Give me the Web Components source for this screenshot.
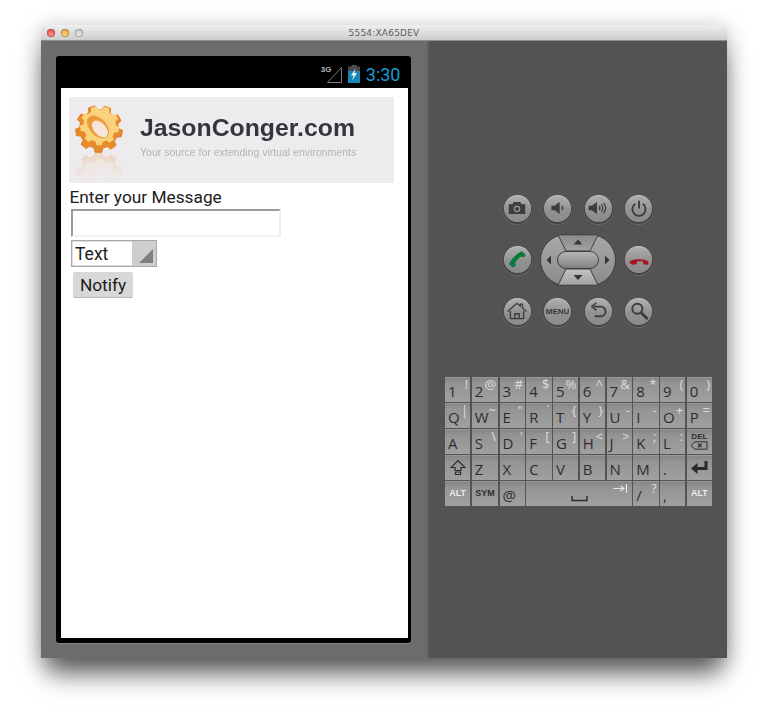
<!DOCTYPE html>
<html>
<head>
<meta charset="utf-8">
<title>5554:XA65DEV</title>
<style>
  html, body { margin: 0; background: #fff; }
  body { font-family: "Roboto", "Liberation Sans", sans-serif; height: 715px; overflow: hidden; }
</style>
</head>
<body>
<emu-window title="5554:XA65DEV">
  <emu-phone slot="left">
    <logo-banner></logo-banner>
    <message-form></message-form>
  </emu-phone>
  <emu-controls slot="right"></emu-controls>
  <emu-keyboard slot="right"></emu-keyboard>
</emu-window>

<script>
class EmuWindow extends HTMLElement {
  constructor() {
    super();
    this.attachShadow({ mode: "open" });
    this.shadowRoot.innerHTML = `
    <style>
      :host {
        display: block;
        width: 686px;
        height: 633px;
        margin: 25px 0 0 41px;
        border-radius: 4px 4px 1px 1px;
        box-shadow: 0 22px 24px -6px rgba(0,0,0,.56), 0 4px 22px rgba(0,0,0,.28);
      }
      .title {
        height: 16px;
        display: flex;
        align-items: center;
        position: relative;
        justify-content: center;
        border-radius: 4px 4px 0 0;
        background: linear-gradient(#efefef, #cdcdcd);
        border-bottom: 1px solid #8f8f8f;
        box-sizing: border-box;
        font: 9px "DejaVu Sans", sans-serif;
        color: #5e5e5e;
        letter-spacing: .2px;
      }
      .lights {
        position: absolute;
        left: 6px;
        top: 4px;
        display: flex;
        gap: 6px;
      }
      .lights i {
        width: 8px;
        height: 8px;
        border-radius: 50%;
        box-shadow: inset 0 0 0 .5px rgba(0,0,0,.35);
      }
      .body { display: flex; height: 617px; }
      .left {
        width: 387px;
        box-sizing: border-box;
        padding: 15px 0 0 15px;
        background: #6c6c6c;
        border-right: 1px solid #5f5f5f;
      }
      .right {
        flex: 1;
        box-sizing: border-box;
        padding: 153px 0 0 16px;
        background: #535353;
        border-left: 1px solid #626262;
      }
    </style>
    <div class="title">
      <div class="lights">
        <i style="background:radial-gradient(circle at 50% 70%,#ff8a80,#d9403a)"></i>
        <i style="background:radial-gradient(circle at 50% 70%,#ffd27a,#d9982c)"></i>
        <i style="background:radial-gradient(circle at 50% 70%,#e8e8e8,#b8b8b8)"></i>
      </div>
      <span>${this.getAttribute("title")}</span>
    </div>
    <div class="body">
      <div class="left"><slot name="left"></slot></div>
      <div class="right"><slot name="right"></slot></div>
    </div>`;
  }
}

class EmuPhone extends HTMLElement {
  constructor() {
    super();
    this.attachShadow({ mode: "open" });
    this.shadowRoot.innerHTML = `
    <style>
      :host {
        display: block;
        width: 355px;
        height: 587px;
        box-sizing: border-box;
        padding: 0 3px 5px 5px;
        background: #000;
        border-radius: 3px;
        box-shadow: 0 1px 1px rgba(255,255,255,.18);
      }
      .status {
        height: 32px;
        display: flex;
        align-items: center;
        justify-content: flex-end;
        padding-right: 7.500px;
        box-sizing: border-box;
        padding-top: 4px;
      }
      .signal { position: relative; width: 21px; height: 19px; margin-right: 5px; }
      .signal b {
        position: absolute;
        left: -1px;
        top: 0;
        font: bold 8px "Liberation Sans", sans-serif;
        color: #b5b5b5;
      }
      .time {
        font: 18px "Roboto", sans-serif;
        color: #1b9ad1;
        margin-left: 6px;
      }
      .screen {
        height: 550px;
        box-sizing: border-box;
        padding: 9px 14px 0 8px;
        background: #fff;
      }
    </style>
    <div class="status">
      <div class="signal">
        <b>3G</b>
        <svg width="21" height="19" viewBox="0 0 21 19">
          <path d="M5.5 17.5 L19.5 2.5 V17.5 Z" fill="none" stroke="#7a7a7a" stroke-width="1"/>
        </svg>
      </div>
      <svg width="12" height="18" viewBox="0 0 12 18">
        <rect x="3.5" y="0" width="5" height="2" fill="#555"/>
        <rect x="0" y="1.5" width="12" height="5" fill="#4a4a4a"/>
        <rect x="0" y="6" width="12" height="12" fill="#1a86b8"/>
        <path d="M7.5 3.5 L3 10.5 H5.6 L4.2 15.5 L9 8 H6.3 Z" fill="#e8f2f7"/>
      </svg>
      <span class="time">3:30</span>
    </div>
    <div class="screen"><slot></slot></div>`;
  }
}

class LogoBanner extends HTMLElement {
  constructor() {
    super();
    this.attachShadow({ mode: "open" });

    // build the gear outline
    const pts = [];
    const teeth = 9;
    for (let i = 0; i < teeth; i++) {
      const a = (i / teeth) * Math.PI * 2 + 0.2;
      const step = (Math.PI * 2) / teeth;
      [[-0.32, 19.5], [-0.2, 23.5], [0.2, 23.5], [0.32, 19.5]].forEach(([d, r]) => {
        const t = a + d * step;
        pts.push((24 + Math.cos(t) * r).toFixed(1) + "," + (24 + Math.sin(t) * r).toFixed(1));
      });
    }
    const gear = `
      <polygon points="${pts.join(" ")}" fill="#e98a2c" stroke="#e08028" stroke-width="1" stroke-linejoin="round"/>
      <polygon points="${pts.join(" ")}" fill="#fbd27c" transform="translate(4.500 .5) scale(.84)"/>
      <ellipse cx="23" cy="22" rx="8.500" ry="13.500" transform="rotate(-42 23 22)" fill="#ee9a3a"/>
      <ellipse cx="25" cy="24" rx="6" ry="10" transform="rotate(-42 25 24)" fill="#f6e6da"/>`;

    this.shadowRoot.innerHTML = `
    <style>
      :host {
        display: flex;
        height: 86px;
        width: 325px;
        background: #eeebee;
        overflow: hidden;
        box-sizing: border-box;
      }
      .mark { width: 71px; padding: 8px 0 0 6px; box-sizing: border-box; flex: none; }
      .mark svg { display: block; }
      .main-gear { filter: blur(.35px); }
      .reflect {
        transform: scaleY(-1);
        margin-top: -2px;
        opacity: .22;
        filter: blur(.7px);
        -webkit-mask-image: linear-gradient(transparent 35%, #000);
        mask-image: linear-gradient(transparent 35%, #000);
      }
      .text { padding-top: 16px; filter: blur(.25px); }
      .name {
        font: bold 24.800px/30px "Liberation Sans", sans-serif;
        color: #33363a;
        white-space: nowrap;
      }
      .tag {
        font: 10.500px/14px "Liberation Sans", sans-serif;
        color: #b4b4b4;
        margin-top: 2px;
        white-space: nowrap;
      }
    </style>
    <div class="mark">
      <svg class="main-gear" width="48" height="48" viewBox="0 0 48 48">${gear}</svg>
      <svg class="reflect" width="48" height="48" viewBox="0 0 48 48">${gear}</svg>
    </div>
    <div class="text">
      <div class="name">JasonConger.com</div>
      <div class="tag">Your source for extending virtual environments</div>
    </div>`;
  }
}

class MessageForm extends HTMLElement {
  constructor() {
    super();
    this.attachShadow({ mode: "open" });
    this.shadowRoot.innerHTML = `
    <style>
      :host {
        display: flex;
        flex-direction: column;
        align-items: flex-start;
        font-family: "Roboto", "Liberation Sans", sans-serif;
        color: #1c1c1c;
      }
      .label { font-size: 17.300px; line-height: 26px; margin-left: .5px; padding-top: 1px; margin-bottom: -1px; }
      .input {
        width: 210px;
        height: 28px;
        box-sizing: border-box;
        margin-left: 2px;
        border: 2px solid #f0f0f0;
        border-top-color: #9a9a9a;
        border-left-color: #9a9a9a;
      }
      .spinner {
        display: flex;
        width: 86px;
        height: 27px;
        box-sizing: border-box;
        margin: 3px 0 0 2px;
        border: 1px solid #a8a8a8;
        box-shadow: inset 0 0 0 .5px #bbb;
        font-size: 17.500px;
      }
      .spinner span { flex: 1; line-height: 27px; padding-left: 3px; }
      .spinner i {
        width: 24px;
        display: flex;
        align-items: flex-end;
        justify-content: flex-end;
        padding: 0 3px 3px 0;
        box-sizing: border-box;
        background: #cecece;
      }
      .btn {
        width: 60px;
        height: 26px;
        margin: 5px 0 0 4px;
        background: #d8d8d8;
        border-radius: 2px;
        border-bottom: 1px solid #b9b9b9;
        box-sizing: border-box;
        display: flex;
        align-items: center;
        justify-content: center;
        font-size: 17.300px;
      }
    </style>
    <div class="label">Enter your Message</div>
    <div class="input"></div>
    <div class="spinner">
      <span>Text</span>
      <i><svg width="14" height="14" viewBox="0 0 14 14"><path d="M14 0 V14 H0 Z" fill="#808080"/></svg></i>
    </div>
    <div class="btn">Notify</div>`;
  }
}

class RoundButton extends HTMLElement {
  constructor() {
    super();
    this.attachShadow({ mode: "open" });
    this.shadowRoot.innerHTML = `
    <style>
      :host {
        display: flex;
        width: 27px;
        height: 27px;
        align-items: center;
        justify-content: center;
        border-radius: 50%;
        background: linear-gradient(#b0b0b0, #929292 55%, #8a8a8a);
        box-shadow: 0 1px 0 1px #454545, 0 2px 1px 1px rgba(255,255,255,.13), inset 0 1px 1px rgba(255,255,255,.25);
        font: bold 8px "Liberation Sans", sans-serif;
        color: #3a3a3a;
      }
      ::slotted(svg) { display: block; }
    </style>
    <slot></slot>`;
  }
}

class EmuControls extends HTMLElement {
  constructor() {
    super();
    this.attachShadow({ mode: "open" });
    const svg = (body) =>
      `<svg width="22" height="22" viewBox="0 0 20 20">${body}</svg>`;
    const ink = "#3c3c3c";
    this.shadowRoot.innerHTML = `
    <style>
      :host {
        display: grid;
        grid-template-columns: repeat(4, 28px);
        grid-template-rows: 28px 52px 28px;
        column-gap: 12.600px;
        row-gap: 11.500px;
        margin-left: 58px;
        align-items: center;
        justify-items: center;
      }
      .dpad { grid-column: span 2; justify-self: center; margin: 0 -4px; display: block; }
    </style>
    <round-button>${svg(`<path d="M2.500 6.500h3.500l1-2h6l1 2h3.500v9h-15z" fill="${ink}"/><circle cx="10" cy="10.800" r="3" fill="#8f8f8f"/><circle cx="10" cy="10.800" r="1.700" fill="${ink}"/>`)}</round-button>
    <round-button>${svg(`<path d="M4 8h3l4.500-3.500v11L7 12H4z" fill="${ink}"/><path d="M13.500 8.200c.8 1 .8 2.600 0 3.600" fill="none" stroke="${ink}" stroke-width="1.200"/>`)}</round-button>
    <round-button>${svg(`<path d="M1.500 8h3L9 4.500v11L4.500 12h-3z" fill="${ink}"/><path d="M11 8.200c.8 1 .8 2.600 0 3.600M13 6.800c1.400 1.800 1.400 4.600 0 6.400M15.200 5.400c2 2.700 2 6.500 0 9.200" fill="none" stroke="${ink}" stroke-width="1.100"/>`)}</round-button>
    <round-button>${svg(`<path d="M6.600 6.200a6 6 0 1 0 6.800 0" fill="none" stroke="${ink}" stroke-width="1.700"/><path d="M10 3.500v7" stroke="${ink}" stroke-width="1.700"/>`)}</round-button>

    <round-button>${svg(`<path d="M14.800 2.200l2.800 2.600c.3.3.3.7.1 1l-1.300 1.600c-.2.3-.6.3-.9.2l-1.700-.7c-1.600.9-4.600 4-5.500 5.700l.6 1.800c.1.300 0 .7-.3.900l-1.800 1.300c-.3.2-.7.2-1-.1L3 14.200c-.3-.3-.3-.7-.1-1C5 9 9.500 4.300 13.700 2.200c.4-.2.8-.2 1.100 0z" fill="#0c7a3c"/>`)}</round-button>
    <svg class="dpad" width="76" height="52" viewBox="0 0 76 52">
      <defs>
        <linearGradient id="ring" x1="0" y1="0" x2="0" y2="1"><stop offset="0" stop-color="#a8a8a8"/><stop offset="1" stop-color="#8c8c8c"/></linearGradient>
        <linearGradient id="up" x1="0" y1="0" x2="0" y2="1"><stop offset="0" stop-color="#8a8a8a"/><stop offset="1" stop-color="#a2a2a2"/></linearGradient>
        <linearGradient id="down" x1="0" y1="0" x2="0" y2="1"><stop offset="0" stop-color="#c4c4c4"/><stop offset="1" stop-color="#a0a0a0"/></linearGradient>
        <linearGradient id="pill" x1="0" y1="0" x2="0" y2="1"><stop offset="0" stop-color="#b8b8b8"/><stop offset="1" stop-color="#7f7f7f"/></linearGradient>
      </defs>
      <rect x=".5" y=".5" width="75" height="51" rx="25.500" fill="url(#ring)" stroke="#3f3f3f"/>
      <path d="M18 .8H58L50 17H26Z" fill="url(#up)" stroke="#3f3f3f"/>
      <path d="M26 35H50L58 51.200H18Z" fill="url(#down)" stroke="#3f3f3f"/>
      <rect x="17.500" y="17.500" width="41" height="17" rx="8.500" fill="url(#pill)" stroke="#3f3f3f"/>
      <path d="M33.500 10.500L38 5.500L42.500 10.500Z M33.500 41L38 46L42.500 41Z M11 21.500L6.500 26L11 30.500Z M65 21.500L69.500 26L65 30.500Z" fill="#363636"/>
    </svg>
    <round-button>${svg(`<path d="M1.500 11.500C4.500 8.600 15.500 8.600 18.500 11.500c.3.3.3.7.2 1l-.6 1.500c-.1.3-.5.5-.8.400l-2.900-.6c-.3-.1-.5-.4-.5-.7l.1-1.600c-2-.6-4-.6-6 0l.1 1.600c0 .3-.2.600-.5.700l-2.900.6c-.3.1-.7-.1-.8-.4L1.300 12.500c-.1-.3-.1-.7.2-1z" fill="#a8141e"/>`)}</round-button>

    <round-button>${svg(`<path d="M1.500 10.500L10 3l3 2.600V3.800h2v3.500l3.500 3.200" fill="none" stroke="${ink}" stroke-width="1.200"/><path d="M4 10v7h12v-7M8 17v-4.500h4V17" fill="none" stroke="${ink}" stroke-width="1.200"/>`)}</round-button>
    <round-button>MENU</round-button>
    <round-button>${svg(`<path d="M6.500 6h6a4.300 4.300 0 0 1 0 8.800H7" fill="none" stroke="${ink}" stroke-width="1.700"/><path d="M8.500 2.500L4.500 6l4 3.500" fill="none" stroke="${ink}" stroke-width="1.500"/>`)}</round-button>
    <round-button>${svg(`<circle cx="8.500" cy="8" r="4.600" fill="none" stroke="${ink}" stroke-width="1.800"/><path d="M12 11.500L17 16.500" stroke="${ink}" stroke-width="2.600" stroke-linecap="round"/>`)}</round-button>`;
  }
}

class EmuKey extends HTMLElement {
  constructor() {
    super();
    this.attachShadow({ mode: "open" });
    const main = this.getAttribute("main") || "";
    const alt = this.getAttribute("alt") || "";
    this.shadowRoot.innerHTML = `
    <style>
      :host {
        display: flex;
        height: 24.500px;
        box-sizing: border-box;
        justify-content: space-between;
        padding: 0 2px 0 3px;
        background: linear-gradient(#848484, #949494 25%, #a0a0a0);
        box-shadow: inset 0 1px 0 #999;
        font-family: "Open Sans", "Liberation Sans", sans-serif;
      }
      :host([center]) { justify-content: center; align-items: center; padding: 0; }
      .main { align-self: flex-end; font-size: 15px; line-height: 21px; color: #2e2e2e; }
      .alt { align-self: flex-start; font-size: 13px; line-height: 15px; color: #dcdcdc; }
      .main:empty, .alt:empty { display: none; }
      ::slotted(*) { display: block; }
    </style>
    <span class="main">${main}</span>
    <span class="alt">${alt}</span>
    <slot></slot>`;
  }
}

class EmuKeyboard extends HTMLElement {
  constructor() {
    super();
    this.attachShadow({ mode: "open" });
    const esc = (s) => s.replace(/&/g, "&amp;").replace(/</g, "&lt;").replace(/"/g, "&quot;");
    const keys = (list) =>
      list.map(([m, a]) => `<emu-key main="${esc(m)}" alt="${esc(a || "")}"></emu-key>`).join("");
    const word = (t, color) =>
      `<emu-key center><b style="font:bold 9px 'Liberation Sans',sans-serif;color:${color}">${t}</b></emu-key>`;

    this.shadowRoot.innerHTML = `
    <style>
      :host {
        display: grid;
        width: 267px;
        margin-top: 52px;
        grid-template-columns: repeat(10, 1fr);
        grid-auto-rows: 24.500px;
        gap: 1.500px;
      }
      .space { grid-column: span 4; }
    </style>
    ${keys([["1","!"],["2","@"],["3","#"],["4","$"],["5","%"],["6","^"],["7","&"],["8","*"],["9","("],["0",")"]])}
    ${keys([["Q","|"],["W","~"],["E","\""],["R","`"],["T","{"],["Y","}"],["U","-"],["I","-"],["O","+"],["P","="]])}
    ${keys([["A"],["S","\\"],["D","'"],["F","["],["G","]"],["H","<"],["J",">"],["K",";"],["L",":"]])}
    <emu-key center>
      <div style="display:flex;flex-direction:column;align-items:center;font:bold 8px/8px 'Liberation Sans',sans-serif;color:#2e2e2e;">
        <span>DEL</span>
        <svg width="18" height="9" viewBox="0 0 18 9"><path d="M1 4.500L5 .8H17V8.200H5Z" fill="none" stroke="#2e2e2e"/><path d="M8 2.800L11.500 6.200M11.500 2.800L8 6.200" stroke="#2e2e2e" stroke-width="1.200"/></svg>
      </div>
    </emu-key>
    <emu-key center>
      <svg width="16" height="17" viewBox="0 0 16 17"><path d="M8 1.500L15 8.500H11V11.500H5V8.500H1Z M5.500 13H10.500V15.500H5.500Z" fill="none" stroke="#2e2e2e" stroke-width="1.200"/></svg>
    </emu-key>
    ${keys([["Z"],["X"],["C"],["V"],["B"],["N"],["M"],["."]])}
    <emu-key center>
      <svg width="19" height="15" viewBox="0 0 19 15"><path d="M16 1V8.500H6" fill="none" stroke="#2a2a2a" stroke-width="3"/><path d="M7.500 3L1 8.500L7.500 14Z" fill="#2a2a2a"/></svg>
    </emu-key>
    ${word("ALT", "#ececec")}
    ${word("SYM", "#2e2e2e")}
    ${keys([["@"]])}
    <emu-key class="space">
      <svg style="align-self:flex-end;margin:0 0 4px 42px" width="17" height="6" viewBox="0 0 17 6"><path d="M1 0V4.500H16V0" fill="none" stroke="#2e2e2e" stroke-width="1.500"/></svg>
      <svg style="align-self:flex-start;margin:3px 2px 0 0" width="15" height="9" viewBox="0 0 15 9"><path d="M0 4.500H10M7.500 2L11 4.500L7.500 7M13.500 0V9" fill="none" stroke="#e6e6e6" stroke-width="1.200"/></svg>
    </emu-key>
    ${keys([["/","?"],[","]])}
    ${word("ALT", "#ececec")}`;
  }
}

customElements.define("emu-window", EmuWindow);
customElements.define("emu-phone", EmuPhone);
customElements.define("logo-banner", LogoBanner);
customElements.define("message-form", MessageForm);
customElements.define("round-button", RoundButton);
customElements.define("emu-controls", EmuControls);
customElements.define("emu-key", EmuKey);
customElements.define("emu-keyboard", EmuKeyboard);
</script>
</body>
</html>
